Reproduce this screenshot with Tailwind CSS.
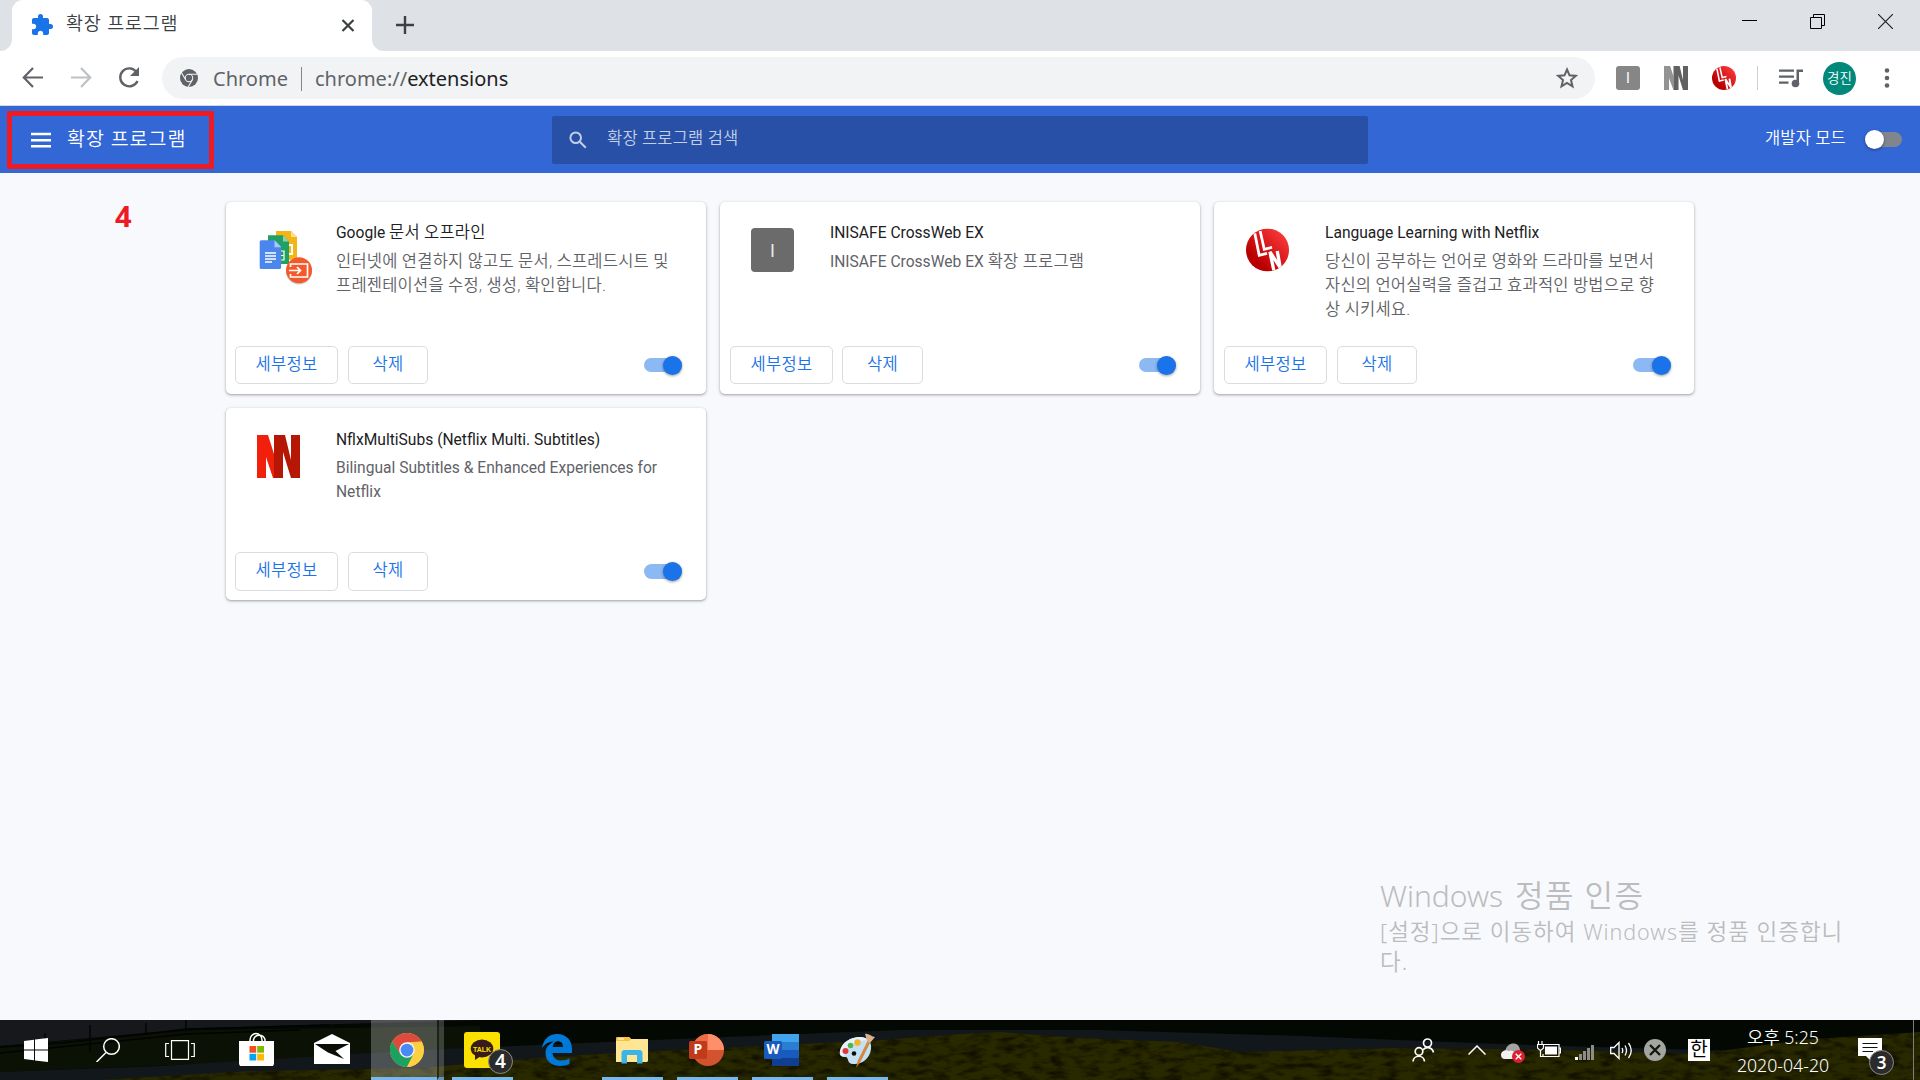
<!DOCTYPE html>
<html lang="ko">

<head>
    <meta charset="UTF-8">
    <meta name="viewport" content="width=device-width, initial-scale=1.0">
    <script src="https://cdn.jsdelivr.net/npm/@tailwindcss/browser@4"></script>
    <title>확장 프로그램</title>
</head>

<body class="overflow-hidden">
    <!-- Shared symbols -->
    <svg class="absolute h-0 w-0">
        <defs>
            <linearGradient id="lln-red" x1="0" y1="1" x2="1" y2="0">
                <stop offset="0.25" stop-color="#b80000" />
                <stop offset="0.45" stop-color="#cf1114" />
                <stop offset="0.9" stop-color="#fb3a3a" />
            </linearGradient>
            <clipPath id="lln-clip"><circle cx="22" cy="22" r="22" /></clipPath>
        </defs>
        <symbol id="lln" viewBox="0 0 44 44">
            <g clip-path="url(#lln-clip)">
                <rect width="44" height="44" fill="url(#lln-red)" />
                <g fill="none" stroke="#fff" stroke-width="2.800">
                    <path d="M9 5l4.500 22.500l8-2" />
                    <path d="M14.500 2.500l4.200 18.700l8-2" />
                    <path d="M28.500 43l-4-19l10.500 16l-3-17" stroke-width="3.400" />
                </g>
            </g>
        </symbol>
        <symbol id="chrome" viewBox="0 0 48 48">
            <circle cx="24" cy="24" r="24" fill="#fbc22d" />
            <path d="M3.200 12A24 24 0 0 1 44.800 12L24 13L14 30z" fill="#dd4b3e" />
            <path d="M3.200 12A24 24 0 0 0 24 48L33.500 29.500L14.500 29.500z" fill="#1da160" />
            <path d="M44.800 12.500A24 24 0 0 1 24 48L34 28.500L30 13z" fill="#fdd041" />
            <circle cx="24" cy="24" r="11" fill="#f4f4f4" />
            <circle cx="24" cy="24" r="9" fill="#4a8af4" />
        </symbol>
    </svg>

    <div class="flex h-[1080px] w-[1920px] flex-col bg-[#f8f9fc] font-['Roboto','Noto_Sans_CJK_KR',sans-serif]">

        <!-- Tab strip -->
        <div class="flex h-[51px] items-stretch bg-[#dee1e6]">
            <div class="w-3 bg-white"><div class="h-full rounded-br-[12px] bg-[#dee1e6]"></div></div>
            <div class="flex w-[360px] items-center rounded-t-[11px] bg-white pr-4 pb-[2px] pl-[18px]">
                <svg class="h-6 w-6" viewBox="0 0 24 24" fill="#1a73e8">
                    <path d="M20.500 11H19V7c0-1.100-.9-2-2-2h-4V3.500a2.500 2.500 0 0 0-5 0V5H4c-1.100 0-1.990.9-1.990 2v3.800H3.500c1.490 0 2.700 1.210 2.700 2.700s-1.210 2.700-2.700 2.700H2V20c0 1.100.9 2 2 2h3.800v-1.500c0-1.490 1.210-2.700 2.700-2.700s2.700 1.210 2.700 2.700V22H17c1.100 0 2-.9 2-2v-4h1.500a2.500 2.500 0 0 0 0-5z" />
                </svg>
                <span class="ml-3 grow pb-[3px] text-[18.500px] tracking-[0.700px] text-[#3c4043] font-['Noto_Sans_CJK_KR',sans-serif] font-[350]">확장 프로그램</span>
                <svg class="h-4 w-4" viewBox="0 0 16 16" stroke="#3c4043" stroke-width="2.200"><path d="M2.500 3L13.500 14M13.500 3L2.500 14" /></svg>
            </div>
            <div class="w-3 bg-white"><div class="h-full rounded-bl-[12px] bg-[#dee1e6]"></div></div>
            <svg class="mt-4 ml-3 h-[18px] w-[18px]" viewBox="0 0 18 18" stroke="#3c4043" stroke-width="2.400"><path d="M0 9H18M9 0V18" /></svg>
            <div class="ml-auto flex gap-[53px] pt-[14px] pr-[27px]">
                <svg class="h-[15px] w-[15px]" viewBox="0 0 15 15" stroke="#000"><path d="M0 6.500H15" /></svg>
                <svg class="h-[15px] w-[15px]" viewBox="0 0 15 15" fill="none" stroke="#000"><path d="M.5 3.500H11.500V14.500H.5zM3.500 3V.5H14.500V11.500H12" /></svg>
                <svg class="h-[15px] w-[15px]" viewBox="0 0 15 15" stroke="#222" stroke-width="1.200"><path d="M0 0L15 15M15 0L0 15" /></svg>
            </div>
        </div>

        <!-- Toolbar -->
        <div class="flex h-[55px] items-center border-b border-[#d5d8dc] bg-white">
            <div class="flex items-center gap-6 pl-[21px]">
                <svg class="h-6 w-6" viewBox="0 0 24 24" fill="none" stroke="#5f6368" stroke-width="2.200"><path d="M22 11.500H3.500M12 2L2.800 11.500L12 21" /></svg>
                <svg class="h-6 w-6" viewBox="0 0 24 24" fill="none" stroke="#bdc1c6" stroke-width="2.200"><path d="M2 11.500H20.500M12 2l9.200 9.500L12 21" /></svg>
                <svg class="h-6 w-6" viewBox="0 0 24 24" fill="none" stroke="#5f6368" stroke-width="2.400"><path d="M19.500 6A9 9 0 1 0 20.500 15" /><path d="M22 1v9h-9z" fill="#5f6368" stroke="none" /></svg>
            </div>
            <div class="ml-[21px] flex h-[42px] w-[1433px] items-center rounded-full bg-[#f1f3f4] pr-[17px] pl-[18px]">
                <svg class="h-[18px] w-[18px]" viewBox="0 0 24 24">
                    <circle cx="12" cy="12" r="12" fill="#5f6368" />
                    <circle cx="12" cy="12" r="5" fill="none" stroke="#f1f3f4" stroke-width="1.400" />
                    <path d="M12 7H23M7.700 14.500L2 5M16.300 14.500L11 24" stroke="#f1f3f4" stroke-width="1.400" />
                </svg>
                <div class="ml-[15px] flex items-center pt-[2px] font-['Noto_Sans',sans-serif] text-[20px] leading-none text-[#5f6368]">
                    <span class="w-[88px]">Chrome</span>
                    <span class="mr-[13px] h-6 w-px bg-[#80868b]"></span>
                    <span>chrome://<span class="text-[#202124]">extensions</span></span>
                </div>
                <svg class="ml-auto h-[22px] w-[22px]" viewBox="0 0 22 22" fill="none" stroke="#5f6368" stroke-width="2"><path d="M11 2.500L13.500 8.300L19.800 8.900L15 13.100L16.500 19.300L11 16L5.500 19.300L7 13.100L2.200 8.900L8.500 8.300z" /></svg>
            </div>
            <div class="ml-[21px] flex items-center gap-6">
                <div class="flex h-6 w-6 items-center justify-center rounded-[3px] bg-[#868686] text-[14px] text-white">I</div>
                <svg class="h-6 w-6" viewBox="0 0 43 43">
                    <path d="M0 0H11L17 19V43L9 22V43H0z" fill="#939393" />
                    <path d="M17 0H28L34 25V0H43V43H34L26 17V43H17z" fill="#616161" />
                </svg>
                <svg class="h-6 w-6"><use href="#lln" /></svg>
            </div>
            <div class="ml-[21px] h-6 w-px bg-[#cdd0d4]"></div>
            <svg class="ml-[21px] h-6 w-6" viewBox="0 0 24 24" fill="#5f6368">
                <path d="M0 3.500h15v2.200H0zM0 9.500h15v2.200H0zM0 15.500h9.500v2.200H0zM17.500 3.500H24v2.400h-4v11.600h-2.500z" />
                <circle cx="16.500" cy="17.500" r="3.800" />
            </svg>
            <div class="ml-5 flex h-[33px] w-[33px] items-center justify-center rounded-full bg-[#00897b] text-[13.500px] font-[350] text-white">경진</div>
            <svg class="ml-[28px] h-5 w-[6px]" viewBox="0 0 6 20" fill="#5f6368"><circle cx="3" cy="2.500" r="2.300" /><circle cx="3" cy="10" r="2.300" /><circle cx="3" cy="17.500" r="2.300" /></svg>
        </div>

        <!-- Extensions header -->
        <div class="relative flex h-[67px] items-center bg-[#3367d6] text-white">
            <svg class="ml-[31px] h-4 w-5" viewBox="0 0 20 16" fill="#fff"><path d="M0 .7h20v2.600H0zM0 6.900h20v2.600H0zM0 13h20v2.600H0z" /></svg>
            <span class="ml-4 w-[485px] text-[19.500px] tracking-[1px] font-[350]">확장 프로그램</span>
            <div class="flex h-12 w-[816px] items-center rounded-[2px] bg-[#2850a7] pl-[17px]">
                <svg class="h-[18px] w-[18px]" viewBox="0 0 18 18" fill="none" stroke="#c3cfe8" stroke-width="2"><circle cx="6.700" cy="6.700" r="5.300" /><path d="M10.800 10.800L16.800 16.800" /></svg>
                <span class="ml-5 text-[16.500px] tracking-[0.200px] font-[350] text-[#c3cfe8]">확장 프로그램 검색</span>
            </div>
            <div class="mr-[18px] ml-auto flex items-center">
                <span class="mr-[19px] text-[16.500px] tracking-[0.200px] font-[350]">개발자 모드</span>
                <div class="flex h-[15px] w-[37px] items-center rounded-full bg-[#80868b]">
                    <div class="h-[19px] w-[19px] shrink-0 rounded-full bg-white shadow-[0_1px_3px_rgba(0,0,0,0.4)]"></div>
                </div>
            </div>
            <!-- Red highlight box -->
            <div class="absolute top-[5px] left-[7px] h-[58px] w-[207px] border-[5px] border-[#ed1c24]"></div>
        </div>

        <!-- Extension list -->
        <div class="relative grow">
            <span class="absolute top-[26px] left-[115px] font-['Noto_Sans',sans-serif] text-[29px] leading-[34px] font-bold text-[#ed1c24]">4</span>

            <div class="ml-[226px] grid w-[1468px] grid-cols-3 gap-x-[14px] gap-y-[14px] pt-[29px]">
                <div class="flex h-[192px] flex-col rounded-[5px] bg-white shadow-[0_1px_2px_rgba(60,64,67,0.3),0_1px_3px_1px_rgba(60,64,67,0.15)]">
                    <div class="flex h-36">
                        <div class="w-[110px] shrink-0 pt-[26px] pl-[30px]">
                            <svg class="h-[60px] w-[60px]" viewBox="0 0 60 60">
                                <path d="M20 3H35L41 9V31.700H20z" fill="#f4b616" /><path d="M35 3L41 9H35z" fill="#fbdf92" />
                                <path d="M31 17H36V26H31" fill="none" stroke="#fff" stroke-width="2" />
                                <path d="M12 7.300H27L33 13.500V36H12z" fill="#20a163" /><path d="M27 7.300L33 13.500H27z" fill="#8fd1b1" />
                                <path d="M24 23H28V32H24M24 27.500H28" fill="none" stroke="#fff" stroke-width="1.200" />
                                <rect x="3.700" y="12.300" width="21.400" height="28.700" rx="1.500" fill="#4b86ee" />
                                <path d="M18.500 12.300H19L25.100 18.800V19.300H18.500z" fill="#a9c6fa" />
                                <path d="M18.500 12L25.500 12L25.500 19z" fill="#20a163" />
                                <path d="M9 25H20M9 28H20M9 31H20M9 34H16" stroke="#fff" stroke-width="1.500" />
                                <circle cx="43" cy="43.500" r="13" fill="#000" opacity=".2" />
                                <circle cx="43" cy="42.300" r="13" fill="#f4592b" />
                                <path d="M34.500 39V36H51.500V49H34.500V46M33 42.500H44M41 39L44.500 42.500L41 46" fill="none" stroke="#fff" stroke-width="1.700" />
                            </svg>
                        </div>
                        <div class="pt-[19px] text-[15.600px] leading-6">
                            <div class="text-[#202124]">Google <span class="text-[16.500px] font-[350] tracking-[0.200px]">문서 오프라인</span></div>
                            <div class="mt-[5px] text-[16.500px] font-[350] tracking-[0.220px] whitespace-nowrap text-[#5f6368]">인터넷에 연결하지 않고도 문서, 스프레드시트 및<br>프레젠테이션을 수정, 생성, 확인합니다.</div>
                        </div>
                    </div>
                    <div class="flex items-center pr-6 pl-[9px] text-[16.500px] font-[350] tracking-[0.300px] text-[#1a73e8]">
                        <button class="h-[38px] w-[103px] rounded-[5px] border border-[#dadce0]">세부정보</button>
                        <button class="ml-[10px] h-[38px] w-20 rounded-[5px] border border-[#dadce0]">삭제</button>
                        <div class="ml-auto flex h-[14px] w-[38px] items-center justify-end rounded-full bg-[#8cb8f3]">
                            <div class="h-[19px] w-[19px] shrink-0 rounded-full bg-[#1a73e8] shadow-[0_1px_3px_rgba(0,0,0,0.4)]"></div>
                        </div>
                    </div>
                </div>

                <div class="flex h-[192px] flex-col rounded-[5px] bg-white shadow-[0_1px_2px_rgba(60,64,67,0.3),0_1px_3px_1px_rgba(60,64,67,0.15)]">
                    <div class="flex h-36">
                        <div class="w-[110px] shrink-0 pt-[26px] pl-[31px]">
                            <div class="flex h-11 w-[43px] items-center justify-center rounded-[4px] bg-[#6b6b6b] text-[18px] text-[#e8e8f0]">I</div>
                        </div>
                        <div class="pt-[19px] text-[15.600px] leading-6">
                            <div class="text-[#202124]">INISAFE CrossWeb EX</div>
                            <div class="mt-[5px] text-[#5f6368]">INISAFE CrossWeb EX <span class="text-[16.500px] font-[350] tracking-[0.200px]">확장 프로그램</span></div>
                        </div>
                    </div>
                    <div class="flex items-center pr-6 pl-[10px] text-[16.500px] font-[350] tracking-[0.300px] text-[#1a73e8]">
                        <button class="h-[38px] w-[103px] rounded-[5px] border border-[#dadce0]">세부정보</button>
                        <button class="ml-[9px] h-[38px] w-[81px] rounded-[5px] border border-[#dadce0]">삭제</button>
                        <div class="ml-auto flex h-[14px] w-[37px] items-center justify-end rounded-full bg-[#8cb8f3]">
                            <div class="h-[19px] w-[19px] shrink-0 rounded-full bg-[#1a73e8] shadow-[0_1px_3px_rgba(0,0,0,0.4)]"></div>
                        </div>
                    </div>
                </div>

                <div class="flex h-[192px] flex-col rounded-[5px] bg-white shadow-[0_1px_2px_rgba(60,64,67,0.3),0_1px_3px_1px_rgba(60,64,67,0.15)]">
                    <div class="flex h-36">
                        <div class="w-[111px] shrink-0 pt-[26px] pl-8">
                            <svg class="h-11 w-[43px]"><use href="#lln" /></svg>
                        </div>
                        <div class="pt-[19px] text-[15.600px] leading-6">
                            <div class="text-[#202124]">Language Learning with Netflix</div>
                            <div class="mt-[5px] text-[16.500px] font-[350] tracking-[0.220px] whitespace-nowrap text-[#5f6368]">당신이 공부하는 언어로 영화와 드라마를 보면서<br>자신의 언어실력을 즐겁고 효과적인 방법으로 향<br>상 시키세요.</div>
                        </div>
                    </div>
                    <div class="flex items-center pr-[23px] pl-[10px] text-[16.500px] font-[350] tracking-[0.300px] text-[#1a73e8]">
                        <button class="h-[38px] w-[103px] rounded-[5px] border border-[#dadce0]">세부정보</button>
                        <button class="ml-[10px] h-[38px] w-20 rounded-[5px] border border-[#dadce0]">삭제</button>
                        <div class="ml-auto flex h-[14px] w-[38px] items-center justify-end rounded-full bg-[#8cb8f3]">
                            <div class="h-[19px] w-[19px] shrink-0 rounded-full bg-[#1a73e8] shadow-[0_1px_3px_rgba(0,0,0,0.4)]"></div>
                        </div>
                    </div>
                </div>

                <div class="flex h-[192px] flex-col rounded-[5px] bg-white shadow-[0_1px_2px_rgba(60,64,67,0.3),0_1px_3px_1px_rgba(60,64,67,0.15)]">
                    <div class="flex h-36">
                        <div class="w-[110px] shrink-0 pt-[27px] pl-[31px]">
                            <svg class="h-[43px] w-[43px]" viewBox="0 0 43 43">
                                <path d="M0 0H11L17 19V43H16L9 22V43H0z" fill="#f0200c" />
                                <path d="M17 0H28L34 25V0H43V43H34L26 17V43H17z" fill="#b51704" />
                            </svg>
                        </div>
                        <div class="pt-5 text-[15.600px] leading-6">
                            <div class="text-[#202124]">NflxMultiSubs (Netflix Multi. Subtitles)</div>
                            <div class="mt-1 text-[#5f6368]">Bilingual Subtitles &amp; Enhanced Experiences for<br>Netflix</div>
                        </div>
                    </div>
                    <div class="flex items-center pr-6 pl-[9px] text-[16.500px] font-[350] tracking-[0.300px] text-[#1a73e8]">
                        <button class="h-[39px] w-[103px] rounded-[5px] border border-[#dadce0]">세부정보</button>
                        <button class="ml-[10px] h-[39px] w-20 rounded-[5px] border border-[#dadce0]">삭제</button>
                        <div class="ml-auto flex h-[15px] w-[38px] items-center justify-end rounded-full bg-[#8cb8f3]">
                            <div class="h-[19px] w-[19px] shrink-0 rounded-full bg-[#1a73e8] shadow-[0_1px_3px_rgba(0,0,0,0.4)]"></div>
                        </div>
                    </div>
                </div>
            </div>

            <!-- Activation watermark -->
            <div class="absolute top-[701px] left-[1380px] font-['Noto_Sans','Noto_Sans_CJK_KR',sans-serif] font-[350] whitespace-nowrap text-[#bbbcbd]">
                <div class="text-[30px] leading-[42px]">Windows <span class="ml-1 text-[31px] tracking-[1.500px]">정품 인증</span></div>
                <div class="text-[22.500px] leading-[30px] tracking-[0.950px]">[설정]으로 이동하여 <span class="text-[21.500px]">Windows</span>를 정품 인증합니<br>다.</div>
            </div>
        </div>

        <!-- Taskbar -->
        <div class="relative flex h-[60px] items-stretch text-white">
            <svg class="absolute inset-0 h-full w-full" viewBox="0 0 1920 60" preserveAspectRatio="none">
                <defs>
                    <filter id="grass" x="0" y="0" width="100%" height="100%">
                        <feTurbulence type="fractalNoise" baseFrequency="0.06 0.16" numOctaves="3" seed="4" />
                        <feColorMatrix values="0 0 0 0 0  0 0 0 0 0  0 0 0 0 0  2.600 0 0 0 -1.100" />
                        <feComposite in2="SourceGraphic" operator="in" />
                    </filter>
                </defs>
                <rect width="1920" height="60" fill="#030803" />
                <path d="M0 0H480L200 8L0 26z" fill="#17181b" />
                <path d="M0 26L200 10L480 6V34L200 44L0 52z" fill="#0b1205" />
                <path d="M0 60V52L160 46L420 30L700 18L900 10L1100 10L1300 16L1500 24L1700 30L1920 34V60z" fill="#11171b" />
                <path d="M100 60L250 51L420 48L560 36L720 28L880 20L960 14L1000 12L1080 18L1180 22L1240 32L1400 28L1560 30L1700 34L1800 20L1920 12V60z" fill="#292900" />
                <path d="M100 60L250 51L420 48L560 36L720 28L880 20L960 14L1000 12L1080 18L1180 22L1240 32L1400 28L1560 30L1700 34L1800 20L1920 12V60z" filter="url(#grass)" opacity=".6" />
                <path d="M0 27L60 23L146 14L186 9L227 8L330 5M0 33L90 24L186 14L300 10M45 13V30M90 5V32M146 3V15M186 0V10" fill="none" stroke="#030303" stroke-width="1.500" />
            </svg>

            <div class="relative flex grow items-stretch">
                <div class="flex w-[371px] items-center">
                    <svg class="ml-6 h-6 w-6" viewBox="0 0 24 24" fill="#fff"><path d="M0 3L10 1.700V11.500H0zM11 1.500L24 0V11.500H11zM0 12.500H10V22.300L0 21zM11 12.500H24V24L11 22.500z" /></svg>
                    <svg class="ml-12 h-6 w-6" viewBox="0 0 24 24" fill="none" stroke="#fff" stroke-width="1.500"><circle cx="15.500" cy="8.500" r="7.800" /><path d="M10 14.500L.5 24" /></svg>
                    <svg class="ml-[45px] h-5 w-[30px]" viewBox="0 0 30 20" fill="none" stroke="#fff" stroke-width="1.200"><path d="M6.500 .7H23.500V19.300H6.500zM4 3.500H.7V16.500H4M26 3.500H29.300V16.500H26" /></svg>
                    <svg class="mb-[2px] ml-11 h-[34px] w-[35px]" viewBox="0 0 35 34">
                        <path d="M11 10V8a6 6.500 0 0 1 12 0v2M14.500 10V7.500a6 6 0 0 1 11.500 0V10" fill="none" stroke="#fff" stroke-width="1.500" />
                        <path d="M0 9H35V32L34 34H1L0 32z" fill="#fff" />
                        <path d="M10.500 14H17.200V20.700H10.500z" fill="#f25022" /><path d="M18.200 14H25V20.700H18.200z" fill="#7fba00" />
                        <path d="M10.500 21.800H17.200V28.500H10.500z" fill="#00a4ef" /><path d="M18.200 21.800H25V28.500H18.200z" fill="#ffb900" />
                    </svg>
                    <svg class="mb-[3px] ml-10 h-[30px] w-9" viewBox="0 0 36 30"><path d="M0 9L18 0L36 9V30H0z" fill="#fff" /><path d="M1 10H35L21.500 17L30 25L14 18.500z" fill="#0a0e06" /></svg>
                </div>
                <div class="flex h-[60px] w-[66px] items-center justify-center border-b-[3px] border-[#76b9ed] bg-white/25 pt-[2px] pl-[6px]">
                    <svg class="h-[34px] w-[34px]"><use href="#chrome" /></svg>
                </div>
                <div class="w-[7px] border-b-[3px] border-l-2 border-b-[#5f98c5] border-l-black/50 bg-white/20"></div>

                <div class="relative ml-2 w-[61px] border-b-[3px] border-[#76b9ed] pt-3 pl-3">
                    <svg class="h-9 w-9" viewBox="0 0 36 36">
                        <rect width="36" height="36" rx="3" fill="#fae100" />
                        <ellipse cx="18" cy="16.500" rx="11.300" ry="9" fill="#391b1b" /><path d="M11 22L11 28L17 24z" fill="#391b1b" />
                        <text x="18" y="19.500" text-anchor="middle" font-family="Liberation Sans" font-weight="bold" font-size="7" fill="#fae100">TALK</text>
                    </svg>
                    <div class="absolute top-[29px] left-9 flex h-[25px] w-[25px] items-center justify-center rounded-full border border-[#8b8b8b] bg-[#2b2b2b] font-['Noto_Sans',sans-serif] text-[19px] font-semibold">4</div>
                </div>
                <svg class="mt-[14px] ml-[29px] h-8 w-[30px]" viewBox="0 0 30 32" fill="#0078d7">
                    <path d="M0 14C1.500 5 7 0 15 0C25 0 30 7 30 15V19H10.500C11 24 15 26.500 19 26.500C22.500 26.500 25.500 25.500 27.500 24.200V30C25 31.300 21.500 32 18 32C9 32 3.500 26.500 3.500 19C3.500 14 6.500 10 12 7.500C6.500 7.500 2.500 10.500 0 14zM10.800 13H21C21 9.500 19 7.300 16 7.300C13 7.300 11 9.800 10.800 13z" />
                </svg>
                <div class="ml-[30px] w-[61px] border-b-[3px] border-[#76b9ed] pt-[17px] pl-[14px]">
                    <svg class="h-[27px] w-8" viewBox="0 0 32 27">
                        <path d="M0 1.500L1 0H13L15 2H32V24L31 25H0z" fill="#ffe694" /><path d="M0 1.500L1 0H13L15 2L13.500 4H0z" fill="#f7c440" /><path d="M2 2H8" stroke="#fff" />
                        <path d="M5.500 26.500V15L7.500 13H24.500L26.500 15V26.500H21V18H11V26.500z" fill="#3cb4e7" />
                    </svg>
                </div>
                <div class="ml-[14px] w-[61px] border-b-[3px] border-[#76b9ed] pt-[14px] pl-3">
                    <svg class="h-8 w-[35px]" viewBox="0 0 35 32">
                        <circle cx="19" cy="16" r="16" fill="#d35230" /><path d="M19 0A16 16 0 0 1 35 16H19z" fill="#ff8f6b" /><path d="M19 0A16 16 0 0 0 3 16H19z" fill="#ed6c47" />
                        <rect y="7" width="18" height="18" rx="1.500" fill="#c13b1b" />
                        <text x="8.800" y="20.300" text-anchor="middle" font-family="Noto Sans" font-weight="bold" font-size="14" fill="#fff">P</text>
                    </svg>
                </div>
                <div class="ml-[14px] w-[61px] border-b-[3px] border-[#76b9ed] pt-[14px] pl-3">
                    <svg class="h-8 w-[35px]" viewBox="0 0 35 32">
                        <path d="M8 0H35V8H8z" fill="#41a5ee" /><path d="M8 8H35V16H8z" fill="#2b7cd3" /><path d="M8 16H35V24H8z" fill="#185abd" /><path d="M8 24H35V32H8z" fill="#103f91" />
                        <rect y="7" width="18" height="18" rx="1.500" fill="#185abd" />
                        <text x="9" y="20.300" text-anchor="middle" font-family="Noto Sans" font-weight="bold" font-size="13.500" fill="#fff">W</text>
                    </svg>
                </div>
                <div class="ml-[14px] w-[61px] border-b-[3px] border-[#76b9ed] pt-[13px] pl-3">
                    <svg class="h-[35px] w-9" viewBox="0 0 36 35">
                        <path d="M1 18C3 9 12 4 21 4C29 4 33 9 32 16C31 26 22 32 14 31C8 31 10 25 7 24C4 24 0 24 1 18z" fill="#c5e0f3" />
                        <path d="M1 18C3 9 12 4 21 4C25 4 28 5 30 8C20 6 8 11 5 23C3 23 0 23 1 18z" fill="#e3f2fb" />
                        <circle cx="15" cy="20.500" r="2.300" fill="#0b0f08" />
                        <circle cx="6.500" cy="18" r="3" fill="#e0393b" /><circle cx="11.500" cy="12.500" r="2.800" fill="#4fb648" /><circle cx="18.500" cy="9.500" r="3.200" fill="#f3b32a" />
                        <path d="M29 8L19 28L17.500 34L21 29L31 9z" fill="#e0893a" stroke="#b8651f" stroke-width=".5" />
                        <path d="M26 1C29 0 33 4 36 4L31 10L28 8z" fill="#d9b18c" />
                    </svg>
                </div>
            </div>

            <!-- System tray -->
            <div class="relative flex items-center">
                <svg class="h-6 w-[23px]" viewBox="0 0 23 24" fill="none" stroke="#fff" stroke-width="1.700"><circle cx="15.500" cy="5" r="4" /><path d="M11 12C13 8.500 20 8.500 21.500 14.500" /><circle cx="7" cy="13.500" r="3.800" /><path d="M1 23.500C1.500 16.500 12 16.500 12.500 23.500" /></svg>
                <svg class="ml-[33px] h-[10px] w-[18px]" viewBox="0 0 18 10" fill="none" stroke="#fff" stroke-width="1.500"><path d="M.5 9.500L9 1L17.500 9.500" /></svg>
                <svg class="mt-[5px] ml-[15px] h-5 w-6" viewBox="0 0 24 20">
                    <path d="M4 9C5 2 10 0 13 0.500C17 1 19 4 19 8L16 16H4z" fill="#a3a3a3" /><path d="M0 12C0 8 5 6 8 8C11 6 15 9 15 16H4C1 16 0 14 0 12z" fill="#f1f1f1" />
                    <circle cx="17.500" cy="13.500" r="6.500" fill="#dc1f2e" /><path d="M14.700 10.700L20.300 16.300M20.300 10.700L14.700 16.300" stroke="#fff" stroke-width="1.400" />
                </svg>
                <svg class="mb-[2px] ml-3 h-[17px] w-6" viewBox="0 0 24 17" fill="none" stroke="#fff" stroke-width="1.200"><path d="M6 3.500H22V15.500H6V13M22 7H23.500V12H22" /><path d="M8 5.500H20V13.500H8z" fill="#fff" stroke="none" /><path d="M1.500 0V3M5 0V3M0 3.500H6.500V7L4.500 9H2.500L.5 7V3.500M3.500 9V15.500H6" /></svg>
                <svg class="mt-[3px] ml-[14px] h-4 w-[19px]" viewBox="0 0 19 16" fill="#8d8d88"><path d="M0 13H3V16H0z" fill="#fff" /><path d="M4 10H7V16H4zM8 7H11V16H8zM12 4H15V16H12zM16 1H19V16H16z" /></svg>
                <svg class="ml-4 h-[19px] w-[23px]" viewBox="0 0 23 19" fill="none" stroke="#fff" stroke-width="1.300"><path d="M.7 6.500H4L9 1.500V17.500L4 12.500H.7z" /><path d="M12 7Q13.500 9.500 12 12M15 4.500Q18 9.500 15 14.500M18.500 2Q24 9.500 18.500 17" /></svg>
                <svg class="ml-[11px] h-[22px] w-[22px]" viewBox="0 0 22 22"><circle cx="11" cy="11" r="11" fill="#a3a5a0" /><path d="M6 6L16 16M16 6L6 16" stroke="#15170f" stroke-width="2.400" /></svg>
                <div class="ml-[22px] flex h-[22px] w-[22px] items-center justify-center overflow-hidden bg-white text-[19px] leading-[22px] text-black">한</div>
                <div class="ml-[25px] w-[96px] pt-px text-center font-['Noto_Sans','Noto_Sans_CJK_KR',sans-serif] text-[17.700px] leading-[28px] font-[350] whitespace-nowrap">
                    <div>오후 5:25</div>
                    <div>2020-04-20</div>
                </div>
                <div class="relative ml-[27px] h-6 w-[55px]">
                    <svg class="h-6 w-6" viewBox="0 0 24 24"><path d="M0 0H24V18H14V24L8 18H0z" fill="#fff" /><path d="M4.500 5.500H19.500M4.500 9.500H19.500M4.500 13.500H15" stroke="#111" /></svg>
                    <div class="absolute top-3 left-[11px] flex h-[25px] w-[25px] items-center justify-center rounded-full border border-[#8b8b8b] bg-[#2b2b2b] font-['Noto_Sans',sans-serif] text-[17px] font-semibold">3</div>
                </div>
                <div class="h-full w-[7px] border-l border-[#7d7d7d]"></div>
            </div>
        </div>
    </div>
</body>

</html>
